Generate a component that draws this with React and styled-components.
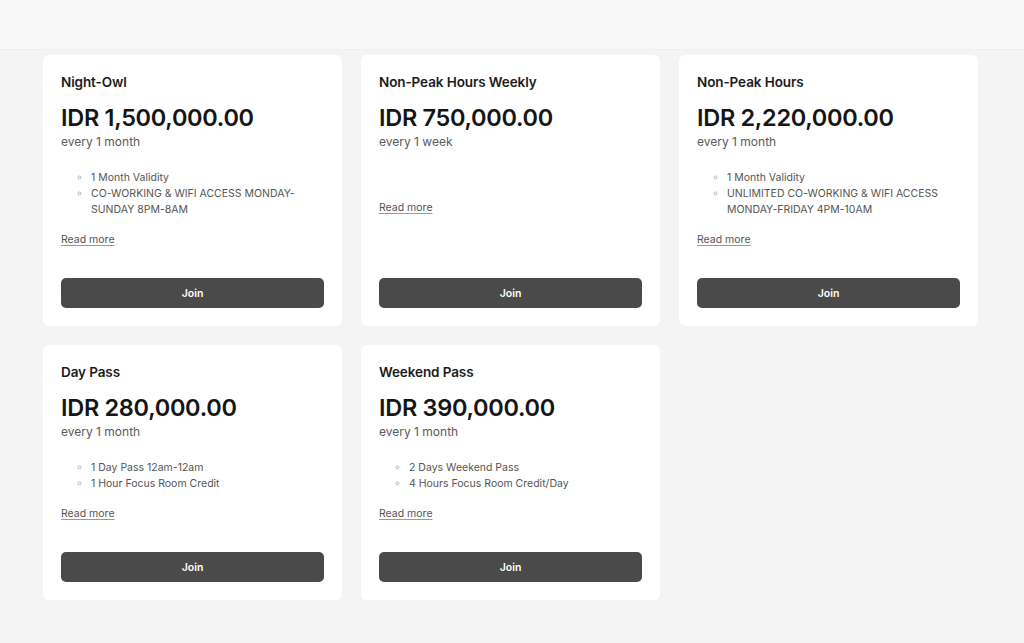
import styled, { createGlobalStyle } from "styled-components";

const GlobalStyle = createGlobalStyle`
    html, body {
        margin: 0;
        padding: 0;
        background: #f4f4f4;
    }
    body {
        font-family: Inter, "Noto Sans", sans-serif;
        color: #1b1b1b;
    }
`;

const Page = styled.div`
    min-height: 643px;
    background: #f4f4f4;
`;

const TopBand = styled.div`
    height: 49px;
    background: #f8f8f8;
    border-bottom: 1px solid #efefef;
`;

const Grid = styled.div`
    display: grid;
    grid-template-columns: repeat(3, 299px);
    gap: 19px;
    padding: 5px 0 40px 43px;
`;

const Card = styled.div`
    background: #fff;
    border-radius: 6px;
    padding: 18px;
    display: flex;
    flex-direction: column;
`;

const Title = styled.h3`
    margin: 0;
    font-size: 13.5px;
    line-height: 18px;
    font-weight: 600;
    color: #1b1b1b;
    letter-spacing: -0.1px;
`;

const Price = styled.div`
    margin-top: 12px;
    font-size: 23.5px;
    line-height: 30px;
    font-weight: 600;
    color: #151515;
    letter-spacing: -0.3px;
`;

const Period = styled.div`
    margin-top: 1px;
    font-size: 12px;
    line-height: 16px;
    color: #5a5a5a;
`;

const Features = styled.ul`
    margin: 20px 0 0 0;
    padding-left: 30px;
    list-style: circle;
    min-height: 16px;
    font-size: 10.5px;
    line-height: 16px;
    color: #555;

    li::marker {
        color: #b5b5b5;
        font-size: 9px;
    }
`;

const ReadMore = styled.a`
    margin-top: 14px;
    font-size: 10.5px;
    line-height: 16px;
    color: #555;
    text-decoration: underline;
    text-underline-offset: 2px;
    text-decoration-color: #999;
    align-self: flex-start;
    cursor: pointer;
`;

const JoinButton = styled.button`
    margin-top: auto;
    height: 30px;
    border: none;
    border-radius: 5px;
    background: #4a4a4a;
    color: #fff;
    font-family: inherit;
    font-size: 10.5px;
    font-weight: 600;
    cursor: pointer;
`;

const Spacer = styled.div`
    height: 30px;
    flex: 0 0 auto;
`;

const plans = [
    {
        name: "Night-Owl",
        price: "IDR 1,500,000.00",
        period: "every 1 month",
        features: ["1 Month Validity", "CO-WORKING & WIFI ACCESS MONDAY-SUNDAY 8PM-8AM"],
    },
    {
        name: "Non-Peak Hours Weekly",
        price: "IDR 750,000.00",
        period: "every 1 week",
        features: [],
    },
    {
        name: "Non-Peak Hours",
        price: "IDR 2,220,000.00",
        period: "every 1 month",
        features: ["1 Month Validity", "UNLIMITED CO-WORKING & WIFI ACCESS MONDAY-FRIDAY 4PM-10AM"],
    },
    {
        name: "Day Pass",
        price: "IDR 280,000.00",
        period: "every 1 month",
        features: ["1 Day Pass 12am-12am", "1 Hour Focus Room Credit"],
    },
    {
        name: "Weekend Pass",
        price: "IDR 390,000.00",
        period: "every 1 month",
        features: ["2 Days Weekend Pass", "4 Hours Focus Room Credit/Day"],
    },
];

const App = () => {
    return (
        <Page>
            <GlobalStyle />
            <TopBand />
            <Grid>
                {plans.map((plan) => (
                    <Card key={plan.name}>
                        <Title>{plan.name}</Title>
                        <Price>{plan.price}</Price>
                        <Period>{plan.period}</Period>
                        <Features>
                            {plan.features.map((f) => (
                                <li key={f}>{f}</li>
                            ))}
                        </Features>
                        <ReadMore>Read more</ReadMore>
                        <Spacer />
                        <JoinButton type="button">Join</JoinButton>
                    </Card>
                ))}
            </Grid>
        </Page>
    );
};

export default App;
